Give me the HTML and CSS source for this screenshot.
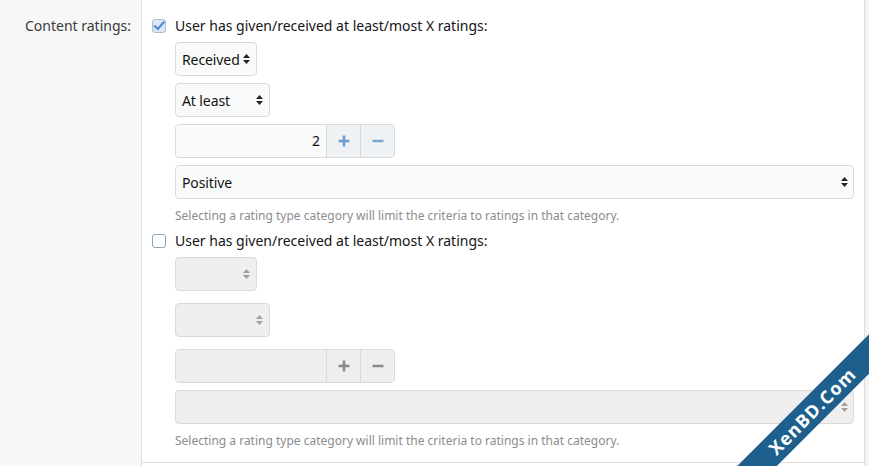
FILE: index.html
```html
<!DOCTYPE html>
<html>
<head>
<meta charset="utf-8">
<link rel="stylesheet" href="styles.css">
</head>
<body>
<div class="frame">
  <div class="row">
    <div class="label-col"><span class="row-label">Content ratings:</span></div>
    <div class="content-col">
      <div class="crit">
        <label class="check-row">
          <span class="cb cb-on">
            <svg width="12" height="12" viewBox="0 0 12 12"><path d="M2 6.2 L4.9 9 L10.4 2.6" fill="none" stroke="#4d8fd0" stroke-width="2.2" stroke-linecap="square"/></svg>
          </span>
          <span class="check-text">User has given/received at least/most X ratings:</span>
        </label>
        <div class="opts">
          <div class="sel w-recv m6"><span class="sel-text">Received</span><span class="arr"><svg width="7" height="10" viewBox="0 0 7 10"><path d="M3.5 0 L7 4 H0 Z M0 6 H7 L3.5 10 Z" fill="#222"/></svg></span></div>
          <div class="sel w-least m7"><span class="sel-text">At least</span><span class="arr"><svg width="7" height="10" viewBox="0 0 7 10"><path d="M3.5 0 L7 4 H0 Z M0 6 H7 L3.5 10 Z" fill="#222"/></svg></span></div>
          <div class="num m7">
            <span class="num-input">2</span>
            <span class="num-btn plus"><svg width="12" height="12" viewBox="0 0 12 12"><path d="M6 0.5 V11.5 M0.5 6 H11.5" stroke="#6b9bd0" stroke-width="2.6"/></svg></span>
            <span class="num-btn minus"><svg width="12" height="12" viewBox="0 0 12 12"><path d="M0.5 6 H11.5" stroke="#7fa6d2" stroke-width="2.6"/></svg></span>
          </div>
          <div class="sel w-full m7"><span class="sel-text">Positive</span><span class="arr arr-r6"><svg width="7" height="10" viewBox="0 0 7 10"><path d="M3.5 0 L7 4 H0 Z M0 6 H7 L3.5 10 Z" fill="#222"/></svg></span></div>
          <div class="help">Selecting a rating type category will limit the criteria to ratings in that category.</div>
        </div>
      </div>
      <div class="crit crit2">
        <label class="check-row">
          <span class="cb"></span>
          <span class="check-text">User has given/received at least/most X ratings:</span>
        </label>
        <div class="opts">
          <div class="sel dis w-recv m6"><span class="sel-text"></span><span class="arr"><svg width="7" height="10" viewBox="0 0 7 10"><path d="M3.5 0 L7 4 H0 Z M0 6 H7 L3.5 10 Z" fill="#a0a0a0"/></svg></span></div>
          <div class="sel dis w-least m12"><span class="sel-text"></span><span class="arr"><svg width="7" height="10" viewBox="0 0 7 10"><path d="M3.5 0 L7 4 H0 Z M0 6 H7 L3.5 10 Z" fill="#a0a0a0"/></svg></span></div>
          <div class="num dis m12">
            <span class="num-input"></span>
            <span class="num-btn plus"><svg width="12" height="12" viewBox="0 0 12 12"><path d="M6 0.5 V11.5 M0.5 6 H11.5" stroke="#8a8a8a" stroke-width="2.6"/></svg></span>
            <span class="num-btn minus"><svg width="12" height="12" viewBox="0 0 12 12"><path d="M0.5 6 H11.5" stroke="#8a8a8a" stroke-width="2.6"/></svg></span>
          </div>
          <div class="sel dis w-full m7"><span class="sel-text"></span><span class="arr arr-r6"><svg width="7" height="10" viewBox="0 0 7 10"><path d="M3.5 0 L7 4 H0 Z M0 6 H7 L3.5 10 Z" fill="#a0a0a0"/></svg></span></div>
          <div class="help">Selecting a rating type category will limit the criteria to ratings in that category.</div>
        </div>
      </div>
    </div>
  </div>
  <div class="row-rest">
    <div class="label-col"></div>
    <div class="content-col rest"></div>
  </div>
</div>
<div class="ribbon-clip"><div class="ribbon">XenBD.Com</div></div>
</body>
</html>
```

FILE: styles.css
```css
html, body {
  margin: 0;
  padding: 0;
  width: 869px;
  height: 466px;
  overflow: hidden;
  background: #f5f5f5;
  font-family: "Noto Sans", "Open Sans", sans-serif;
  color: #141414;
  position: relative;
}

.frame {
  width: 865px;
  display: flex;
  flex-direction: column;
}

.row {
  display: flex;
}

.row-rest {
  display: flex;
  height: 4px;
}

.label-col {
  width: 141px;
  flex: none;
  background: #f7f7f7;
  border-right: 1px solid #e2e2e2;
  box-sizing: content-box;
  text-align: right;
}

.row-label {
  display: block;
  padding: 16px 10px 0 0;
  line-height: 20px;
  font-size: 14px;
  color: #3a3a3a;
}

.content-col {
  flex: 1;
  background: #fff;
  border-right: 1px solid #dcdcdc;
  padding: 16px 10px 13px 10px;
  border-bottom: 1px solid #e0e0e0;
}

.content-col.rest {
  border-bottom: none;
  padding: 0;
}

.check-row {
  display: flex;
  align-items: center;
  height: 20px;
}

.cb {
  width: 12px;
  height: 12px;
  border: 1px solid #8ea3bc;
  border-radius: 3px;
  background: #fff;
  display: flex;
  align-items: center;
  justify-content: center;
  margin-right: 9px;
  flex: none;
}

.cb-on {
  background: #dbe7f4;
  border-color: #a7bfd9;
}

.check-text {
  font-size: 14px;
  line-height: 20px;
}

.crit2 {
  margin-top: 7px;
}

.opts {
  margin-left: 23px;
  display: flex;
  flex-direction: column;
  align-items: flex-start;
}

.m6 { margin-top: 6px; }
.m7 { margin-top: 7px; }
.m12 { margin-top: 12px; }

.sel {
  box-sizing: border-box;
  height: 34px;
  border: 1px solid #dadada;
  border-radius: 4px;
  background: #f9fafa;
  display: flex;
  align-items: center;
  justify-content: space-between;
  padding: 0 6px 0 6px;
  font-size: 14px;
}

.sel-text {
  letter-spacing: -0.1px;
}

.sel.dis, .num.dis .num-input, .num.dis .num-btn {
  background: #efefef;
}

.w-recv { width: 82px; }
.w-least { width: 95px; }
.w-full { width: 679px; }

.arr {
  display: flex;
  align-items: center;
}

.arr-r6 { margin-right: -1px; }

.num {
  display: flex;
  height: 34px;
  width: 220px;
  box-sizing: border-box;
  border: 1px solid #dadada;
  border-radius: 4px;
  overflow: hidden;
}

.num-input {
  width: 150px;
  box-sizing: border-box;
  background: #f9fafa;
  text-align: right;
  padding-right: 6px;
  line-height: 32px;
  font-size: 14px;
}

.num-btn {
  flex: 1;
  display: flex;
  align-items: center;
  justify-content: center;
  background: #eef2f5;
  border-left: 1px solid #dadada;
}

.help {
  margin-top: 9px;
  font-size: 12px;
  line-height: 16px;
  color: #8c8c8c;
}

.ribbon-clip {
  position: absolute;
  left: 0;
  top: 0;
  width: 869px;
  height: 466px;
  overflow: hidden;
  pointer-events: none;
}

.ribbon {
  position: absolute;
  left: 662px;
  top: 397px;
  width: 300px;
  height: 28px;
  line-height: 28px;
  background: #1e5f8d;
  color: #fff;
  font-family: "Open Sans", "Noto Sans", sans-serif;
  font-weight: 700;
  font-size: 18px;
  letter-spacing: 1px;
  text-align: center;
  transform: rotate(-45deg);
}
```
